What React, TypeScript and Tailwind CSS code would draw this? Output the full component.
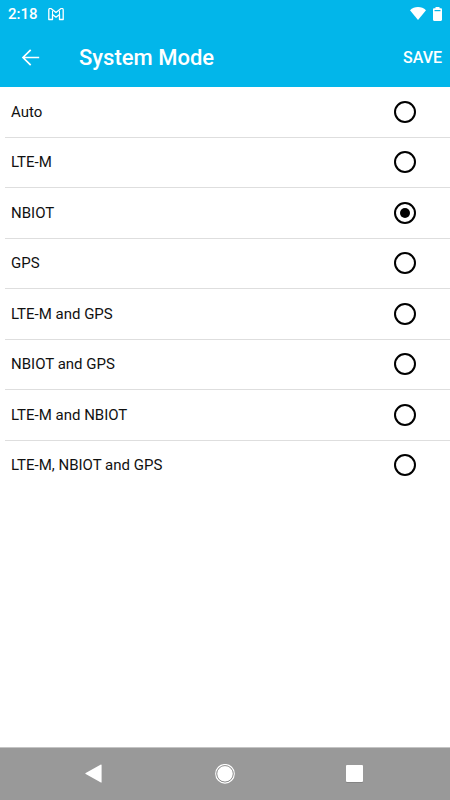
import { useState } from "react";

const MODES = [
  "Auto",
  "LTE-M",
  "NBIOT",
  "GPS",
  "LTE-M and GPS",
  "NBIOT and GPS",
  "LTE-M and NBIOT",
  "LTE-M, NBIOT and GPS",
];

function StatusBar() {
  return (
    <div className="flex h-7 items-center justify-between px-2 text-white">
      <div className="flex items-center gap-2.5">
        <span className="text-[15px] leading-5 font-medium">2:18</span>
        {/* Mail notification */}
        <svg width="16" height="13" viewBox="0 0 16 13" fill="none" stroke="currentColor" strokeWidth="1.3" strokeLinejoin="round">
          <path d="M.8 2C.8.3 2.300 0 3.300.8L8 4.500 12.700.8c1-.8 2.500-.5 2.500 1.200v9.500h-3.700V6.500L8 9.200 4.500 6.500v5H.8z" />
          <path d="M4.500 6.500V2.700M11.500 6.500V2.700" strokeWidth="1" />
        </svg>
      </div>
      <div className="flex items-center gap-1.5">
        <svg width="17" height="14" viewBox="0 0 17 14" fill="currentColor">
          <path d="M8 13 0 3.300C2.200 1.200 4.900.1 8 .1s5.800 1.100 8 3.200z" />
        </svg>
        <svg width="9" height="14" viewBox="0 0 9 14">
          <path d="M2.500 0h4v1.300h1.300c.7 0 1.200.5 1.200 1.200v10.300c0 .7-.5 1.200-1.200 1.200H1.200C.5 14 0 13.500 0 12.800V2.500c0-.7.5-1.200 1.200-1.200h1.300z" fill="currentColor" />
          <path d="M1.500 3.600h6" stroke="#02b6ea" strokeWidth="1.200" />
        </svg>
      </div>
    </div>
  );
}

function NavBar() {
  return (
    <nav className="grid h-[53px] grid-cols-[1fr_75px_1fr] items-center border-t border-[#c4c4c4] bg-[#999999] text-white">
      <button type="button" aria-label="Back" className="flex justify-center">
        <svg width="18" height="20" viewBox="0 0 18 20" fill="currentColor">
          <path d="M16.600 1v17.200c0 .4-.4.6-.7.4L.7 10.100a.6.6 0 0 1 0-1L15.900.6c.3-.2.7 0 .7.4z" />
        </svg>
      </button>
      <button type="button" aria-label="Home" className="flex justify-center">
        <svg width="21" height="21" viewBox="0 0 21 21">
          <circle cx="10" cy="9.800" r="9.200" fill="none" stroke="currentColor" strokeWidth="1.300" />
          <circle cx="10" cy="9.800" r="8.200" fill="currentColor" stroke="#777777" strokeWidth=".7" />
        </svg>
      </button>
      <button type="button" aria-label="Recent apps" className="flex justify-center pr-1">
        <svg width="17" height="18" viewBox="0 0 17 18">
          <rect y="1.200" width="17" height="16.600" rx="1" fill="#7d7d7d" />
          <rect width="17" height="17" rx="1" fill="currentColor" />
        </svg>
      </button>
    </nav>
  );
}

export default function App() {
  const [mode, setMode] = useState("NBIOT");

  return (
    <div className="flex min-h-screen flex-col bg-white font-['Roboto',sans-serif]">
      <header className="bg-[#02b6ea]">
        <StatusBar />
        <div className="flex h-[59px] items-center pl-[21px] pr-2 text-white">
          <button type="button" aria-label="Go back">
            <svg width="19" height="18" viewBox="0 0 19 18" fill="none" stroke="currentColor" strokeWidth="1.700">
              <path d="M18.200 8.500H2M9.700.8 2 8.500l7.700 7.700" />
            </svg>
          </button>
          <h1 className="flex-1 pl-[39px] text-[22px] leading-7 font-medium">System Mode</h1>
          <button type="button" className="text-base leading-5 font-medium">
            SAVE
          </button>
        </div>
      </header>

      <main className="flex-1">
        <div role="radiogroup" aria-label="System Mode" className="grid min-h-[404px] auto-rows-fr pl-[5px]">
          {MODES.map((name) => (
            <label
              key={name}
              className="flex items-center justify-between border-b border-[#dedede] pl-1.5 pr-[34px] text-[15px] leading-5 text-[#111111] last:border-transparent"
            >
              {name}
              <input
                type="radio"
                name="mode"
                value={name}
                checked={mode === name}
                onChange={() => setMode(name)}
                className="grid size-[22px] appearance-none place-content-center rounded-full border-2 border-black before:size-[10px] before:rounded-full checked:before:bg-black"
              />
            </label>
          ))}
        </div>
      </main>

      <NavBar />
    </div>
  );
}
